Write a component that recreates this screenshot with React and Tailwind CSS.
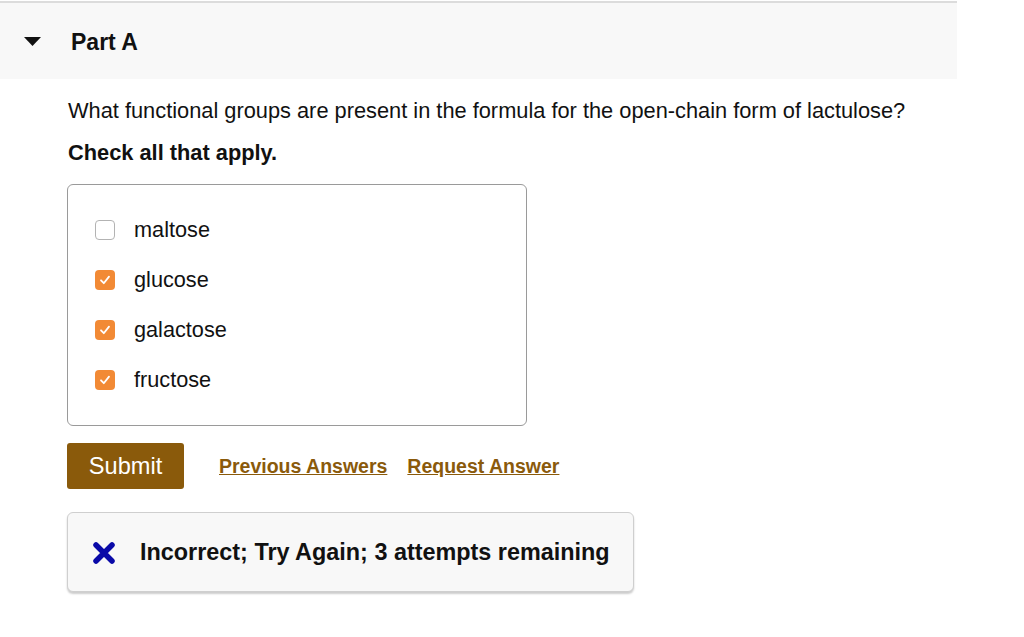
import { useState } from 'react';

const options = [
  { id: 'maltose', label: 'maltose', checked: false },
  { id: 'glucose', label: 'glucose', checked: true },
  { id: 'galactose', label: 'galactose', checked: true },
  { id: 'fructose', label: 'fructose', checked: true },
];

const CheckBox = ({ checked, onClick }) => (
  <button
    type="button"
    onClick={onClick}
    className={
      checked
        ? 'w-5 h-5 rounded-[4px] bg-[#f28a35] flex items-center justify-center'
        : 'w-5 h-5 rounded-[4px] bg-white border border-[#b3b3b3]'
    }
  >
    {checked && (
      <svg width="12" height="12" viewBox="0 0 12 12" fill="none">
        <path d="M2 6.3 L4.8 9.2 L10 2.6" stroke="white" strokeWidth="1.8" strokeLinecap="round" strokeLinejoin="round" />
      </svg>
    )}
  </button>
);

const App = () => {
  const [items, setItems] = useState(options);

  const toggle = (id) => {
    setItems(items.map((it) => (it.id === id ? { ...it, checked: !it.checked } : it)));
  };

  return (
    <div className="min-h-screen bg-white font-['Liberation_Sans',Arial,sans-serif] text-[#111]">
      <div className="w-[957px] border-t-2 border-[#dcdcdc] mt-[1px] h-[78px] bg-[#f8f8f8] flex items-center">
        <svg width="17" height="10" viewBox="0 0 17 10" className="ml-[24px] mt-[2px]">
          <polygon points="0,0 17,0 8.5,9" fill="#111" />
        </svg>
        <h2 className="ml-[30px] mt-[2px] text-[23px] font-bold">Part A</h2>
      </div>

      <div className="pl-[67px] pt-[20px]">
        <p className="pl-[1px] text-[21.8px] leading-[24px]">
          What functional groups are present in the formula for the open-chain form of lactulose?
        </p>
        <p className="pl-[1px] mt-[18px] text-[21.8px] leading-[24px] font-bold">Check all that apply.</p>

        <div className="mt-[19px] w-[460px] h-[242px] border border-[#9a9a9a] rounded-[6px] pt-[20px] pl-[27px] flex flex-col">
          {items.map((it) => (
            <label key={it.id} className="h-[50px] flex items-center gap-[19px] cursor-pointer">
              <CheckBox checked={it.checked} onClick={() => toggle(it.id)} />
              <span className="text-[21.7px]">{it.label}</span>
            </label>
          ))}
        </div>

        <div className="mt-[17px] flex items-center">
          <button className="w-[117px] h-[46px] bg-[#8a5a0b] rounded-[3px] text-white text-[23.6px] pt-[2px]">
            Submit
          </button>
          <a href="#" className="ml-[35px] mt-[2px] text-[19.5px] font-bold text-[#8a5a0b] underline">
            Previous Answers
          </a>
          <a href="#" className="ml-[20px] mt-[2px] text-[19.5px] font-bold text-[#8a5a0b] underline">
            Request Answer
          </a>
        </div>

        <div className="mt-[23px] w-[567px] h-[80px] bg-[#f8f8f8] border border-[#cfcfcf] rounded-[6px] shadow-[0_2px_2px_rgba(0,0,0,0.2)] flex items-center">
          <svg width="24" height="22" viewBox="0 0 24 22" className="ml-[24px] mt-[2px]">
            <path d="M4 3 L20 19 M20 3 L4 19" stroke="#0a0aa8" strokeWidth="5.5" strokeLinecap="round" />
          </svg>
          <span className="ml-[24px] mt-[2px] text-[23.4px] font-bold">Incorrect; Try Again; 3 attempts remaining</span>
        </div>
      </div>
    </div>
  );
};

export default App;
